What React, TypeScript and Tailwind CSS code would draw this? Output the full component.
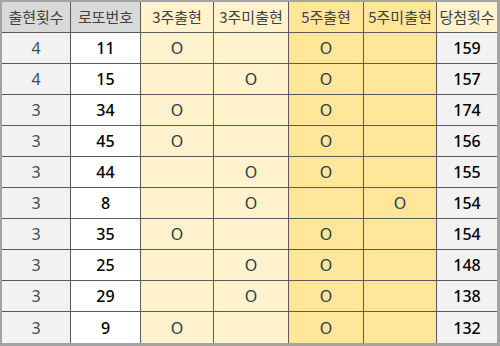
const rows = [
  { cnt: 4, no: 11, w3: true, n3: false, w5: true, n5: false, win: 159 },
  { cnt: 4, no: 15, w3: false, n3: true, w5: true, n5: false, win: 157 },
  { cnt: 3, no: 34, w3: true, n3: false, w5: true, n5: false, win: 174 },
  { cnt: 3, no: 45, w3: true, n3: false, w5: true, n5: false, win: 156 },
  { cnt: 3, no: 44, w3: false, n3: true, w5: true, n5: false, win: 155 },
  { cnt: 3, no: 8, w3: false, n3: true, w5: false, n5: true, win: 154 },
  { cnt: 3, no: 35, w3: true, n3: false, w5: true, n5: false, win: 154 },
  { cnt: 3, no: 25, w3: false, n3: true, w5: true, n5: false, win: 148 },
  { cnt: 3, no: 29, w3: false, n3: true, w5: true, n5: false, win: 138 },
  { cnt: 3, no: 9, w3: true, n3: false, w5: true, n5: false, win: 132 },
]

const cols = 'grid grid-cols-[69px_70px_73px_75px_75px_73px_1fr]'
const cell = 'flex items-center justify-center border-r border-b border-[#5a5a5a]'

export default function App() {
  return (
    <div className="w-[500px] h-[346px] bg-white border-l-2 border-t-2 border-r-[3px] border-b-[3px] border-[#a3a3a3] flex flex-col font-['Noto_Sans_CJK_KR',sans-serif] text-[15px]">
      <div className={`${cols} flex-1 text-[#404040]`}>
        <div className={`${cell} bg-[#d9d9d9]`}>출현횟수</div>
        <div className={`${cell} bg-[#d9d9d9]`}>로또번호</div>
        <div className={`${cell} bg-[#fff2cc]`}>3주출현</div>
        <div className={`${cell} bg-[#fff2cc]`}>3주미출현</div>
        <div className={`${cell} bg-[#ffe699]`}>5주출현</div>
        <div className={`${cell} bg-[#ffe699]`}>5주미출현</div>
        <div className={`${cell} bg-[#fff2cc] border-r-0`}>당첨횟수</div>
      </div>
      {rows.map((r, i) => {
        const last = i === rows.length - 1 ? 'border-b-0' : ''
        return (
          <div key={i} className={`${cols} flex-1 font-['Noto_Sans',sans-serif] text-[16px]`}>
            <div className={`${cell} ${last} bg-[#f2f2f2] text-[#3d4b5c]`}>{r.cnt}</div>
            <div className={`${cell} ${last} bg-white text-black font-medium`}>{r.no}</div>
            <div className={`${cell} ${last} bg-[#fff2cc] text-[#2a3a4a]`}>{r.w3 ? 'O' : ''}</div>
            <div className={`${cell} ${last} bg-[#fff2cc] text-[#2a3a4a]`}>{r.n3 ? 'O' : ''}</div>
            <div className={`${cell} ${last} bg-[#ffe699] text-[#2a3a4a]`}>{r.w5 ? 'O' : ''}</div>
            <div className={`${cell} ${last} bg-[#ffe699] text-[#2a3a4a]`}>{r.n5 ? 'O' : ''}</div>
            <div className={`${cell} ${last} bg-[#f2f2f2] text-black font-medium border-r-0`}>{r.win}</div>
          </div>
        )
      })}
    </div>
  )
}
